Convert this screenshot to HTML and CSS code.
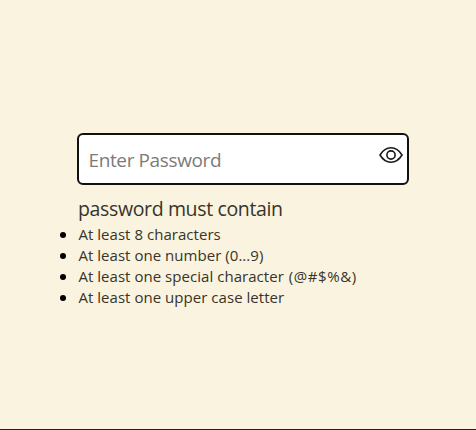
FILE: index.html
```html
<!DOCTYPE html>
<html lang="en">
<head>
<meta charset="utf-8">
<title>Password</title>
<link rel="stylesheet" href="styles.css">
</head>
<body>
<main class="form">
  <div class="field">
    <input class="field-input" type="text" placeholder="Enter Password" aria-label="Password">
    <svg class="field-eye" viewBox="0 0 24 18" fill="none" stroke="#1a1a1a" stroke-width="1.6"><path d="M1 9C4 4 8 1.8 12 1.8s8 2.2 11 7.2c-3 5-7 7.2-11 7.2S4 14 1 9Z"/><circle cx="12" cy="9" r="4.1"/></svg>
  </div>
  <h1 class="title">password must contain</h1>
  <ul class="rules">
    <li>At least 8 characters</li>
    <li>At least one number (0...9)</li>
    <li>At least one special character <span class="symbols">(@#$%&amp;)</span></li>
    <li>At least one upper case letter</li>
  </ul>
</main>
</body>
</html>
```
FILE: styles.css
```css
* { box-sizing: border-box; }
body {
  margin: 0;
  height: 430px;
  padding: 133px 0 0 77px;
  background: #f9f3df;
  border-bottom: 1px solid #222;
  color: #38342a;
  font-family: "Open Sans", "Noto Sans", sans-serif;
  overflow: hidden;
}
.form { width: 332px; }
.field {
  display: flex;
  align-items: center;
  height: 52px;
  padding: 0 4.5px 0 9.5px;
  border: 2px solid #111;
  border-radius: 6px;
  background: #fff;
}
.field-input {
  flex: 1;
  min-width: 0;
  padding: 2px 0 0;
  border: 0;
  outline: 0;
  background: none;
  font: 19px "Open Sans", sans-serif;
  letter-spacing: -0.38px;
}
.field-input::placeholder { color: #7d7b77; }
.field-eye { width: 24px; height: 18px; margin-bottom: 8px; }
.title {
  margin: 10px 0 0 1px;
  font-size: 19.5px;
  font-weight: 400;
  line-height: 27px;
  letter-spacing: -0.36px;
}
.rules {
  margin: 2px 0 0 1px;
  padding: 0;
  list-style: none;
  font-size: 15px;
  line-height: 21px;
  letter-spacing: 0.04px;
}
.rules li {
  display: block;
  margin-left: -18px;
}
.rules li::before {
  content: "";
  display: inline-block;
  width: 6px;
  height: 6px;
  margin-right: 12.4px;
  border-radius: 50%;
  background: #000;
  vertical-align: 2px;
}
.symbols {
  margin-left: 1px;
  letter-spacing: 0.6px;
}
```
